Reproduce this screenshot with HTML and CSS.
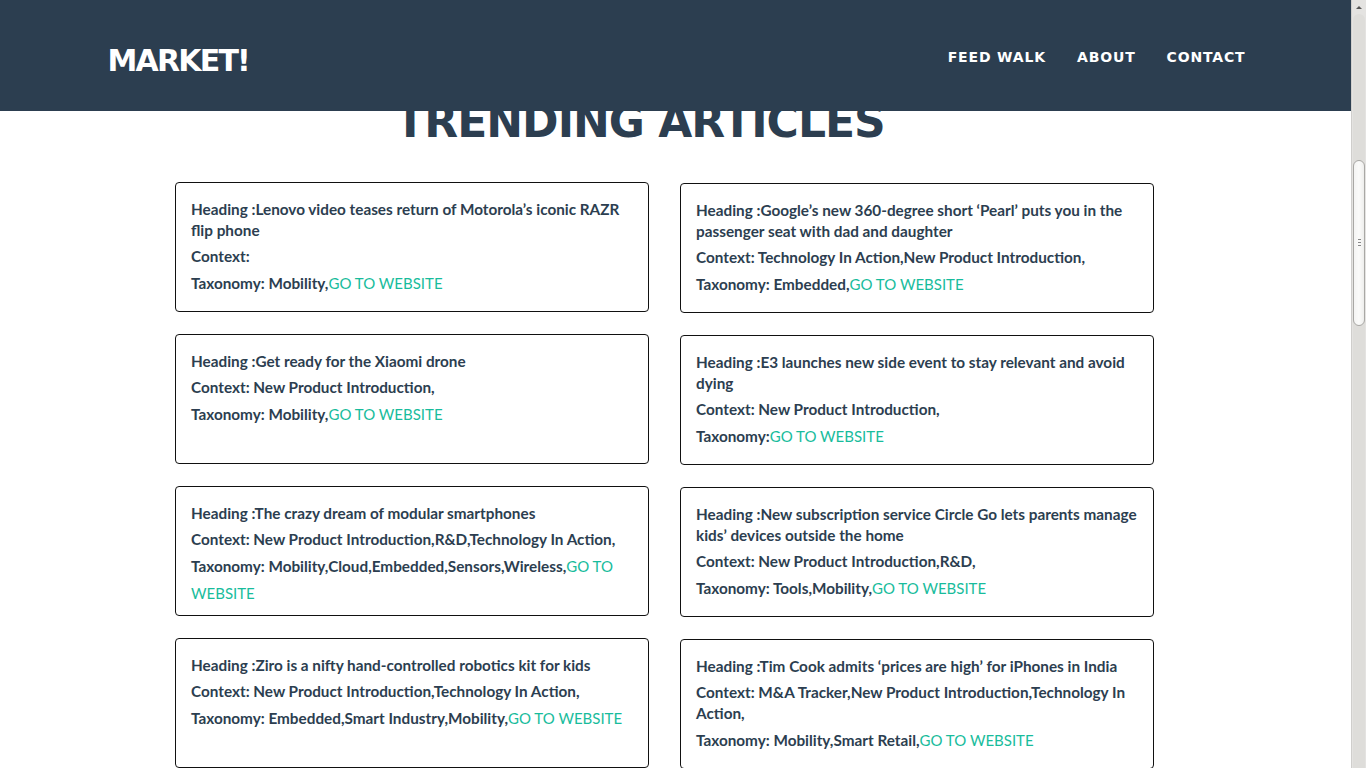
FILE: index.html
```html
<!DOCTYPE html>
<html lang="en">
<head>
<meta charset="utf-8">
<title>Market! - Trending Articles</title>
<link rel="stylesheet" href="styles.css">
</head>
<body>
<nav class="navbar">
  <div class="container nav-inner">
    <a class="brand" href="#">MARKET!</a>
    <ul class="nav-links">
      <li><a href="#">Feed Walk</a></li>
      <li><a href="#">About</a></li>
      <li><a href="#">Contact</a></li>
    </ul>
  </div>
</nav>

<main class="page">
  <h2 class="title">Trending Articles</h2>
  <div class="grid">
    <div class="col">
      <div class="card">
        <p class="head">Heading :Lenovo video teases return of Motorola’s iconic RAZR flip phone</p>
        <p class="ctx">Context:</p>
        <p class="tax">Taxonomy: Mobility,<a href="#">GO TO WEBSITE</a></p>
      </div>
      <div class="card">
        <p class="head">Heading :Get ready for the Xiaomi drone</p>
        <p class="ctx">Context: New Product Introduction,</p>
        <p class="tax">Taxonomy: Mobility,<a href="#">GO TO WEBSITE</a></p>
      </div>
      <div class="card">
        <p class="head">Heading :The crazy dream of modular smartphones</p>
        <p class="ctx">Context: New Product Introduction,R&amp;D,Technology In Action,</p>
        <p class="tax">Taxonomy: Mobility,Cloud,Embedded,Sensors,Wireless,<a href="#">GO TO WEBSITE</a></p>
      </div>
      <div class="card">
        <p class="head">Heading :Ziro is a nifty hand-controlled robotics kit for kids</p>
        <p class="ctx">Context: New Product Introduction,Technology In Action,</p>
        <p class="tax">Taxonomy: Embedded,Smart Industry,Mobility,<a href="#">GO TO WEBSITE</a></p>
      </div>
    </div>
    <div class="col col-right">
      <div class="card">
        <p class="head">Heading :Google’s new 360-degree short ‘Pearl’ puts you in the passenger seat with dad and daughter</p>
        <p class="ctx">Context: Technology In Action,New Product Introduction,</p>
        <p class="tax">Taxonomy: Embedded,<a href="#">GO TO WEBSITE</a></p>
      </div>
      <div class="card">
        <p class="head">Heading :E3 launches new side event to stay relevant and avoid dying</p>
        <p class="ctx">Context: New Product Introduction,</p>
        <p class="tax">Taxonomy:<a href="#">GO TO WEBSITE</a></p>
      </div>
      <div class="card">
        <p class="head">Heading :New subscription service Circle Go lets parents manage kids’ devices outside the home</p>
        <p class="ctx">Context: New Product Introduction,R&amp;D,</p>
        <p class="tax">Taxonomy: Tools,Mobility,<a href="#">GO TO WEBSITE</a></p>
      </div>
      <div class="card">
        <p class="head">Heading :Tim Cook admits ‘prices are high’ for iPhones in India</p>
        <p class="ctx">Context: M&amp;A Tracker,New Product Introduction,Technology In Action,</p>
        <p class="tax">Taxonomy: Mobility,Smart Retail,<a href="#">GO TO WEBSITE</a></p>
      </div>
    </div>
  </div>
</main>

<div class="scrollbar" aria-hidden="true">
  <div class="sb-arrow"></div>
  <div class="sb-track">
    <div class="sb-thumb"><span class="sb-grip"></span></div>
  </div>
</div>
</body>
</html>
```

FILE: styles.css
```css
html {
  overflow: hidden;
}

body {
  margin: 0 15px 0 0;
  background: #ffffff;
  font-family: Lato, "Open Sans", "Liberation Sans", sans-serif;
  color: #2c3e50;
}

a {
  text-decoration: none;
}

.container {
  width: 1140px;
  margin: 0 auto;
}

.navbar {
  position: fixed;
  top: 0;
  left: 0;
  right: 15px;
  height: 111px;
  background: #2c3e50;
  z-index: 10;
}

.nav-inner {
  display: flex;
  align-items: center;
  justify-content: space-between;
  height: 100%;
}

.brand {
  font-family: "DejaVu Sans", "Liberation Sans", sans-serif;
  font-weight: 700;
  font-size: 30px;
  letter-spacing: -1.8px;
  color: #ffffff;
  margin-left: 2px;
  margin-top: 10px;
}

.nav-links {
  display: flex;
  list-style: none;
  margin: 0;
  padding: 0;
  gap: 31px;
  margin-top: -1px;
}

.nav-links a {
  font-family: "DejaVu Sans", "Liberation Sans", sans-serif;
  font-weight: 700;
  font-size: 14px;
  letter-spacing: 0.85px;
  text-transform: uppercase;
  color: #ffffff;
}

.page {
  padding-top: 96px;
}

.title {
  font-family: "DejaVu Sans", "Liberation Sans", sans-serif;
  font-weight: 700;
  font-size: 44px;
  line-height: 52px;
  letter-spacing: -1px;
  text-transform: uppercase;
  text-align: center;
  margin: 0;
  padding-right: 71px;
  color: #2c3e50;
}

.grid {
  display: flex;
  gap: 31px;
  margin: 34px 0 0 175px;
  width: 979px;
}

.col {
  display: flex;
  flex-direction: column;
  gap: 22px;
  width: 474px;
}

.col-right {
  padding-top: 1px;
}

.card {
  box-sizing: border-box;
  height: 130px;
  border: 1px solid #111111;
  border-radius: 4px;
  padding: 16px 12px 0 15px;
  font-size: 15.3px;
  font-weight: 700;
  overflow: hidden;
}

.card p {
  margin: 0;
}

.head {
  line-height: 21px;
  margin-bottom: 5px !important;
}

.ctx {
  line-height: 21px;
}

.tax {
  line-height: 27px;
  margin-top: 3px !important;
}

.tax a {
  font-weight: 400;
  font-size: 15px;
  color: #18bc9c;
}

.scrollbar {
  position: fixed;
  top: 0;
  right: 0;
  width: 15px;
  height: 100%;
  background: #e4e3e1;
  border-left: 1px solid #cfcecc;
  box-sizing: border-box;
  z-index: 20;
}

.sb-arrow {
  height: 14px;
  position: relative;
}

.sb-arrow::after {
  content: "";
  position: absolute;
  left: 4px;
  top: 6px;
  border-left: 3px solid transparent;
  border-right: 3px solid transparent;
  border-bottom: 3px solid #555;
}

.sb-track {
  position: relative;
  height: calc(100% - 14px);
  margin: 0 1px;
  border-radius: 6px 6px 0 0;
  background: #deddda;
}

.sb-thumb {
  position: absolute;
  top: 146px;
  left: 0;
  right: 0;
  height: 166px;
  background: linear-gradient(to right, #f4f4f3, #fbfbfa, #eeeeec);
  border: 1px solid #a9a8a5;
  border-radius: 6px;
  box-sizing: border-box;
}

.sb-grip {
  position: absolute;
  left: 4px;
  top: 78px;
  width: 3px;
  height: 7px;
  border-top: 1px solid #888;
  border-bottom: 1px solid #888;
  box-sizing: border-box;
}

.sb-grip::after {
  content: "";
  position: absolute;
  left: 0;
  right: 0;
  top: 2px;
  border-top: 1px solid #888;
}
```
